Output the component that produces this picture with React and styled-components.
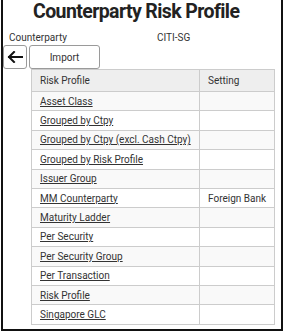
import React from "react";
import styled, { createGlobalStyle } from "styled-components";

const Global = createGlobalStyle`
  body {
    margin: 0;
    background: #ffffff;
    font-family: Roboto, "Liberation Sans", Arial, sans-serif;
    color: #333333;
  }
`;

const rows = [
  { name: "Asset Class", setting: "" },
  { name: "Grouped by Ctpy", setting: "" },
  { name: "Grouped by Ctpy (excl. Cash Ctpy)", setting: "" },
  { name: "Grouped by Risk Profile", setting: "" },
  { name: "Issuer Group", setting: "" },
  { name: "MM Counterparty", setting: "Foreign Bank" },
  { name: "Maturity Ladder", setting: "" },
  { name: "Per Security", setting: "" },
  { name: "Per Security Group", setting: "" },
  { name: "Per Transaction", setting: "" },
  { name: "Risk Profile", setting: "" },
  { name: "Singapore GLC", setting: "" },
];

const Frame = styled.div`
  margin-left: 1px;
  width: 278px;
  height: 329px;
  border: 2px solid #111111;
  border-top: none;
  display: flex;
  flex-direction: column;
`;

const Title = styled.h1`
  margin: 0;
  padding-left: 30px;
  font-size: 19.5px;
  line-height: 24px;
  letter-spacing: -0.6px;
  font-weight: 700;
  color: #222222;
`;

const InfoRow = styled.div`
  display: flex;
  margin-top: 8px;
  padding-left: 6px;
  font-size: 10px;
  line-height: 12px;
  color: #333333;
`;

const Label = styled.span`
  width: 148px;
`;

const Toolbar = styled.div`
  display: flex;
  gap: 2px;
  margin-top: 1px;
`;

const Button = styled.button`
  width: ${(p) => p.$w}px;
  height: 24px;
  padding: 0;
  border: 1px solid #9a9a9a;
  border-radius: 3px;
  background: #ffffff;
  font-family: inherit;
  font-size: 10px;
  color: #333333;
  display: flex;
  align-items: center;
  justify-content: center;
`;

const Table = styled.table`
  margin-left: 28px;
  width: 244px;
  border-collapse: collapse;
  font-size: 10px;
  color: #333333;
`;

const Th = styled.th`
  height: 21px;
  padding: 0 0 0 8px;
  text-align: left;
  font-weight: 400;
  background: #eeeeee;
  border: 1px solid #cccccc;
  width: ${(p) => p.$w || "auto"};
`;

const Tr = styled.tr`
  background: ${(p) => (p.$odd ? "#f9f9f9" : "#ffffff")};
`;

const Td = styled.td`
  height: 18.4px;
  padding: 0 0 0 8px;
  border: 1px solid #cccccc;
`;

const Link = styled.a`
  color: #333333;
  text-decoration: underline;
`;

const BackArrow = () => (
  <svg width="16" height="12" viewBox="0 0 16 12">
    <path
      d="M15 6H2M7 1L2 6l5 5"
      fill="none"
      stroke="#111111"
      strokeWidth="2"
      strokeLinecap="square"
    />
  </svg>
);

export default function App() {
  return (
    <>
      <Global />
      <Frame>
        <Title>Counterparty Risk Profile</Title>
        <InfoRow>
          <Label>Counterparty</Label>
          <span>CITI-SG</span>
        </InfoRow>
        <Toolbar>
          <Button $w={24}>
            <BackArrow />
          </Button>
          <Button $w={71}>Import</Button>
        </Toolbar>
        <Table>
          <thead>
            <tr>
              <Th $w="159px">Risk Profile</Th>
              <Th>Setting</Th>
            </tr>
          </thead>
          <tbody>
            {rows.map((r, i) => (
              <Tr key={r.name} $odd={i % 2 === 0}>
                <Td>
                  <Link>{r.name}</Link>
                </Td>
                <Td>{r.setting}</Td>
              </Tr>
            ))}
          </tbody>
        </Table>
      </Frame>
    </>
  );
}
